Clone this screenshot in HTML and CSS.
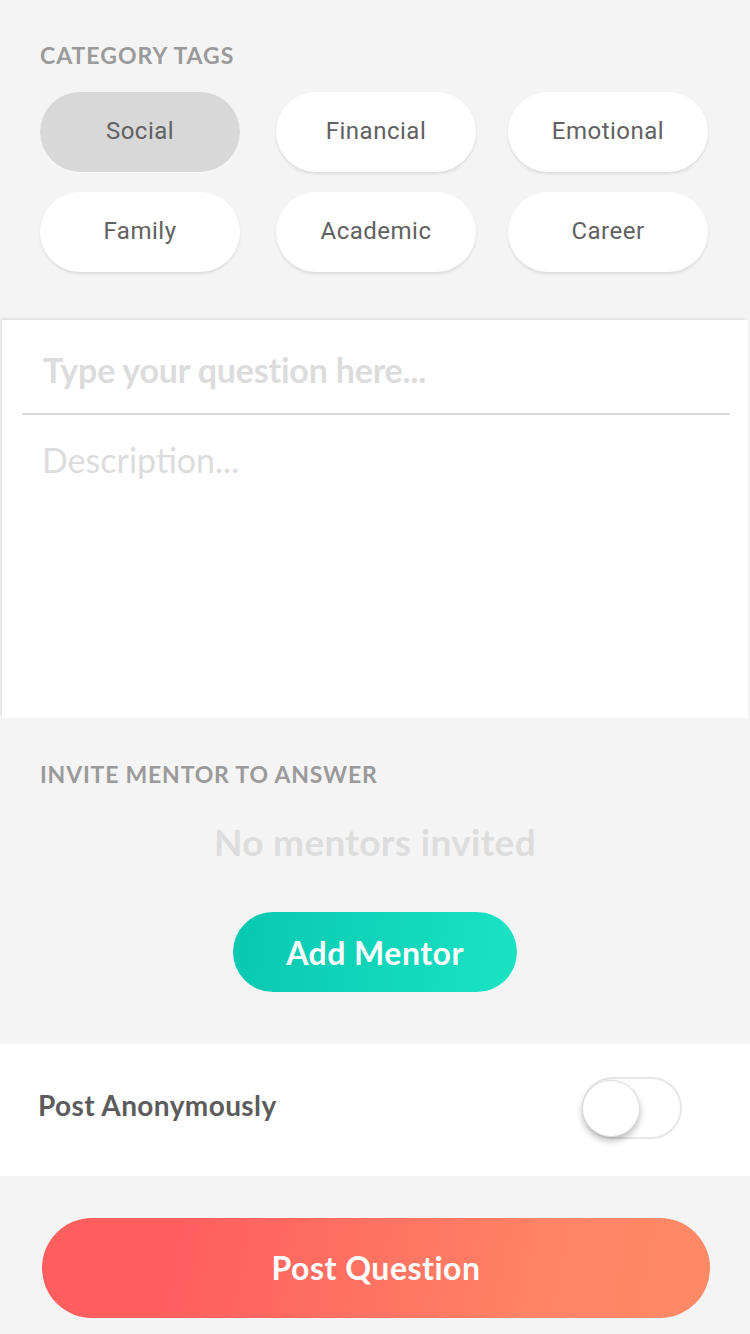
FILE: index.html
```html
<!DOCTYPE html>
<html>
<head>
<meta charset="utf-8">
<link rel="stylesheet" href="styles.css">
</head>
<body>
<div class="page">
  <section class="tags-section">
    <div class="label">CATEGORY TAGS</div>
    <div class="tags">
      <div class="tag tag-active">Social</div>
      <div class="tag">Financial</div>
      <div class="tag">Emotional</div>
      <div class="tag">Family</div>
      <div class="tag">Academic</div>
      <div class="tag">Career</div>
    </div>
  </section>

  <section class="card">
    <div class="question">Type your question here...</div>
    <div class="divider"></div>
    <div class="description">Description...</div>
  </section>

  <section class="mentor-section">
    <div class="label label-invite">INVITE MENTOR TO ANSWER</div>
    <div class="empty">No mentors invited</div>
    <div class="add-wrap"><div class="btn-add">Add Mentor</div></div>
  </section>

  <section class="anon-row">
    <div class="anon-label">Post Anonymously</div>
    <div class="toggle"><div class="knob"></div></div>
  </section>

  <section class="post-wrap">
    <div class="btn-post">Post Question</div>
  </section>
</div>
</body>
</html>
```

FILE: styles.css
```css
* { box-sizing: border-box; }
html, body { margin: 0; padding: 0; }
body {
  background: #f4f4f4;
  font-family: "Lato", "Noto Sans", sans-serif;
  width: 750px;
  height: 1334px;
  overflow: hidden;
}
.page { display: flex; flex-direction: column; }

.label {
  font-family: "Lato", sans-serif;
  font-weight: 700;
  font-size: 23px;
  color: #9a9a9a;
  line-height: 28px;
  letter-spacing: 1px;
}
.label-invite { letter-spacing: 0.8px; }

.tags-section {
  padding: 41px 0 0 40px;
  height: 320px;
}
.tags {
  margin-top: 23px;
  display: grid;
  grid-template-columns: 200px 200px 200px;
  column-gap: 34px;
  row-gap: 20px;
}
.tag {
  width: 200px;
  height: 80px;
  border-radius: 40px;
  background: #ffffff;
  box-shadow: 0 2px 3px rgba(0,0,0,0.10);
  display: flex;
  align-items: center;
  justify-content: center;
  font-family: "Roboto", sans-serif;
  font-size: 24px;
  color: #616161;
  letter-spacing: 0.5px;
  padding-bottom: 2px;
}
.tag:nth-child(3n+2) { margin-left: 2px; }
.tag-active {
  background: #d8d8d8;
  box-shadow: 0 1px 1px rgba(255,255,255,0.9);
}

.card {
  background: #ffffff;
  height: 398px;
  margin: 0 2px 0 2px;
  box-shadow: -2px -2px 3px -1px rgba(0,0,0,0.12);
  display: flex;
  flex-direction: column;
}
.question {
  padding: 30px 0 0 41px;
  height: 93px;
  font-family: "Lato", sans-serif;
  font-weight: 700;
  font-size: 34px;
  color: #dcdcdc;
  line-height: 40px;
  letter-spacing: -0.2px;
}
.divider {
  height: 2px;
  background: #d8d8d8;
  margin: 0 18px 0 20px;
}
.description {
  padding: 25px 0 0 40px;
  font-family: "Lato", sans-serif;
  font-weight: 400;
  font-size: 34px;
  color: #dcdcdc;
  line-height: 40px;
  letter-spacing: 0px;
}

.mentor-section {
  height: 326px;
  padding: 42px 0 0 40px;
  display: flex;
  flex-direction: column;
}
.empty {
  margin: 32px 40px 0 0;
  text-align: center;
  font-family: "Lato", sans-serif;
  font-weight: 700;
  font-size: 37px;
  color: #dddddd;
  line-height: 44px;
  letter-spacing: 0.3px;
}
.add-wrap {
  margin: 48px 40px 0 0;
  display: flex;
  justify-content: center;
}
.btn-add {
  width: 284px;
  height: 80px;
  border-radius: 40px;
  background: linear-gradient(100deg, #08c8b0 0%, #1ae3c4 100%);
  color: #ffffff;
  font-family: "Lato", sans-serif;
  font-weight: 700;
  font-size: 32px;
  display: flex;
  align-items: center;
  justify-content: center;
  letter-spacing: 0.5px;
}

.anon-row {
  background: #ffffff;
  height: 132px;
  padding: 0 68px 0 38px;
  display: flex;
  align-items: center;
  justify-content: space-between;
}
.anon-label {
  font-family: "Lato", sans-serif;
  font-weight: 700;
  font-size: 28px;
  color: #5c5c5c;
  padding-bottom: 10px;
  letter-spacing: 0.4px;
}
.toggle {
  position: relative;
  width: 100px;
  height: 62px;
  border: 2px solid #e6e6e6;
  border-radius: 31px;
  background: #ffffff;
  margin-bottom: 4px;
}
.knob {
  position: absolute;
  left: -2px;
  top: 1px;
  width: 58px;
  height: 57px;
  border-radius: 50%;
  background: #ffffff;
  border: 1px solid #dddddd;
  box-shadow: 0 4px 6px rgba(0,0,0,0.25);
}

.post-wrap {
  padding: 42px 40px 0 42px;
}
.btn-post {
  height: 100px;
  border-radius: 50px;
  background: linear-gradient(100deg, #ff5e5e 20%, #ff8466 75%, #ff8a66 100%);
  color: #ffffff;
  font-family: "Lato", sans-serif;
  font-weight: 700;
  font-size: 32px;
  display: flex;
  align-items: center;
  justify-content: center;
  letter-spacing: 0.5px;
  padding-bottom: 2px;
}
```
